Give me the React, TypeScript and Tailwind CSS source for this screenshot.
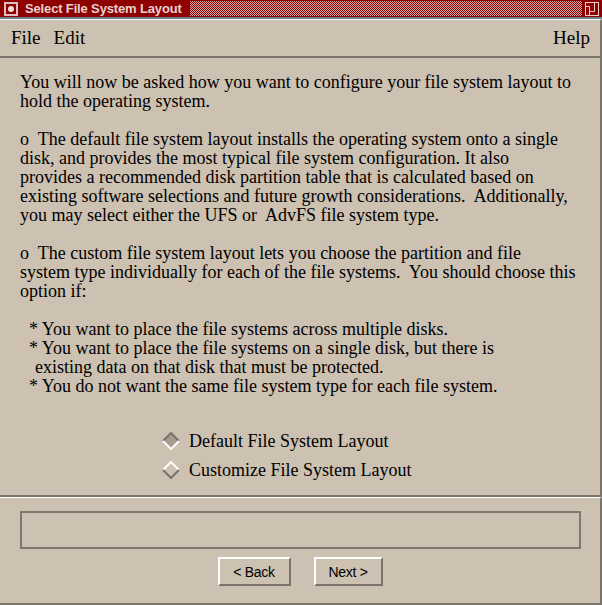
import React from "react";

const BG = "bg-[#cdc1b1]";

function Diamond({ selected }: { selected: boolean }) {
  return (
    <svg width="18" height="18" viewBox="0 0 18 18" className="shrink-0">
      {selected ? (
        <>
          <polygon points="9,1 17,9 9,17 1,9" fill="#a89c8e" />
          <polyline points="1,9 9,1 17,9" fill="none" stroke="#7a7268" strokeWidth="2" />
          <polyline points="1,9 9,17 17,9" fill="none" stroke="#ffffff" strokeWidth="2" />
        </>
      ) : (
        <>
          <polygon points="9,1 17,9 9,17 1,9" fill="#cdc1b1" />
          <polyline points="1,9 9,1 17,9" fill="none" stroke="#ffffff" strokeWidth="2" />
          <polyline points="1,9 9,17 17,9" fill="none" stroke="#7a7268" strokeWidth="2" />
        </>
      )}
    </svg>
  );
}

const lines: { t: string; pl?: string }[] = [
  { t: "You will now be asked how you want to configure your file system layout to" },
  { t: "hold the operating system." },
  { t: "" },
  { t: "o  The default file system layout installs the operating system onto a single" },
  { t: "disk, and provides the most typical file system configuration. It also" },
  { t: "provides a recommended disk partition table that is calculated based on" },
  { t: "existing software selections and future growth considerations.  Additionally," },
  { t: "you may select either the UFS or  AdvFS file system type." },
  { t: "" },
  { t: "o  The custom file system layout lets you choose the partition and file" },
  { t: "system type individually for each of the file systems.  You should choose this" },
  { t: "option if:" },
  { t: "" },
  { t: "* You want to place the file systems across multiple disks.", pl: "pl-[9px]" },
  { t: "* You want to place the file systems on a single disk, but there is", pl: "pl-[9px]" },
  { t: "existing data on that disk that must be protected.", pl: "pl-[15px]" },
  { t: "* You do not want the same file system type for each file system.", pl: "pl-[9px]" },
];

export default function App() {
  return (
    <div className={`w-[602px] h-[605px] ${BG} flex flex-col overflow-hidden text-black`} style={{ fontFamily: '"Liberation Serif", serif' }}>
      {/* Title bar */}
      <div className="h-[17px] bg-[#8e0000] flex items-center shrink-0">
        <div className="w-[21px] h-[17px] flex items-center justify-center">
          <div className="w-[14px] h-[14px] border-2 border-[#e0bcbc] flex items-center justify-center">
            <div className="w-[6px] h-[6px] rounded-full bg-[#f0dcdc]" />
          </div>
        </div>
        <div className="pl-[4px] pr-[8px] text-[13px] font-bold text-[#e6d2d2] leading-none whitespace-nowrap tracking-[-0.15px]" style={{ fontFamily: '"Liberation Sans", sans-serif' }}>
          Select File System Layout
        </div>
        <div className="flex-1 h-[15px] bg-[repeating-conic-gradient(#8e0000_0_25%,#d8a8a8_0_50%)] bg-[length:2px_2px]" />
        <div className="w-[20px] h-[17px] flex items-center justify-center">
          <svg width="14" height="14" viewBox="0 0 14 14">
            <rect x="0.5" y="0.5" width="13" height="13" fill="none" stroke="#eccccc" />
            <polyline points="0.5,4.5 4.5,4.5 4.5,13.5" fill="none" stroke="#eccccc" />
            <polyline points="4.5,9.5 9.5,9.5 9.5,0.5" fill="none" stroke="#eccccc" />
          </svg>
        </div>
      </div>
      <div className="h-[2px] bg-[#6e8092] shrink-0" />

      {/* Menu bar */}
      <div className="h-[39px] shrink-0 border-t border-white border-b-2 border-r-2 border-b-[#7b746b] border-r-[#7b746b] flex items-center pl-[11px] pr-[10px] text-[19px]">
        <span>File</span>
        <span className="ml-[13px]">Edit</span>
        <span className="ml-auto">Help</span>
      </div>

      {/* Content */}
      <div className="h-[439px] shrink-0 border-b-2 border-b-[#7b746b] border-r-2 border-r-[#7b746b] flex flex-col px-[20px] pt-[15px]">
        <div className="text-[18px] leading-[19px]">
          {lines.map((l, i) => (
            <div key={i} className={`whitespace-pre h-[19px] ${l.pl ?? ""}`}>{l.t}</div>
          ))}
        </div>
        <div className="flex flex-col gap-[11px] pl-[142px] mt-[36px] text-[18px] leading-[18px]">
          <div className="flex items-center gap-[9px]">
            <Diamond selected />
            <span>Default File System Layout</span>
          </div>
          <div className="flex items-center gap-[9px]">
            <Diamond selected={false} />
            <span>Customize File System Layout</span>
          </div>
        </div>
      </div>

      {/* Bottom */}
      <div className="flex-1 border-t border-white border-b-2 border-b-[#7b746b] border-r-2 border-r-[#7b746b] flex flex-col items-center pt-[13px]">
        <div className="w-[561px] h-[38px] border-2 border-[#7f786f]" />
        <div className="flex gap-[23px] mt-[8px]" style={{ fontFamily: '"Liberation Sans", sans-serif' }}>
          <button className="w-[73px] h-[29px] border-2 border-t-white border-l-white border-b-[#7b746b] border-r-[#7b746b] text-[14px] leading-none flex items-center justify-center tracking-[-0.3px]">
            &lt; Back
          </button>
          <button className="w-[69px] h-[29px] border-2 border-t-white border-l-white border-b-[#7b746b] border-r-[#7b746b] text-[14px] leading-none flex items-center justify-center tracking-[-0.3px]">
            Next &gt;
          </button>
        </div>
      </div>
    </div>
  );
}
